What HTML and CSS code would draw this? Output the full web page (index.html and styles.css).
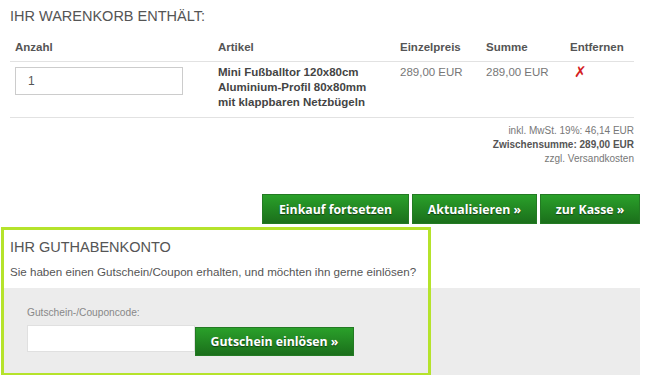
FILE: index.html
```html
<!DOCTYPE html>
<html>

<head>
    <title>Warenkorb</title>
    <link rel="stylesheet" href="styles.css">
</head>

<body>
    <div class="page">
        <h2 class="title">Ihr Warenkorb enthält:</h2>

        <table class="cart">
            <tr>
                <th class="col-qty">Anzahl</th>
                <th class="col-item">Artikel</th>
                <th class="col-price">Einzelpreis</th>
                <th class="col-sum">Summe</th>
                <th class="col-del">Entfernen</th>
            </tr>
            <tr>
                <td><input type="text" class="qty" value="1"></td>
                <td class="item">Mini Fußballtor 120x80cm Aluminium-Profil 80x80mm mit klappbaren Netzbügeln</td>
                <td class="price">289,00 EUR</td>
                <td class="price">289,00 EUR</td>
                <td><span class="remove">&#10007;</span></td>
            </tr>
        </table>

        <div class="totals">
            <div>inkl. MwSt. 19%: 46,14 EUR</div>
            <div class="sub">Zwischensumme: 289,00 EUR</div>
            <div>zzgl. Versandkosten</div>
        </div>

        <div class="actions">
            <button class="btn btn-continue">Einkauf fortsetzen</button>
            <button class="btn btn-update">Aktualisieren &raquo;</button>
            <button class="btn btn-checkout">zur Kasse &raquo;</button>
        </div>

        <div class="coupon">
            <h2 class="coupon-title">Ihr Guthabenkonto</h2>
            <p class="coupon-text">Sie haben einen Gutschein/Coupon erhalten, und möchten ihn gerne einlösen?</p>
            <div class="coupon-box">
                <label class="coupon-label">Gutschein-/Couponcode:</label>
                <div class="coupon-row">
                    <input type="text" class="coupon-input">
                    <button class="btn btn-coupon">Gutschein einlösen &raquo;</button>
                </div>
            </div>
            <div class="highlight"></div>
        </div>
    </div>
</body>

</html>
```

FILE: styles.css
```css
* {
    box-sizing: border-box;
}

body {
    margin: 0;
    font-family: "Liberation Sans", Arial, sans-serif;
    color: #555;
    background: #fff;
}

.page {
    width: 640px;
}

.title {
    margin: 0;
    padding: 6px 10px 0;
    font-size: 14.5px;
    font-weight: normal;
    line-height: 20px;
    text-transform: uppercase;
    color: #555;
}

.cart {
    margin: 10px 0 0 10px;
    width: 624px;
    border-collapse: collapse;
    font-size: 11.5px;
}

.cart th {
    padding: 4px 5px 7px;
    line-height: 14px;
    text-align: left;
    color: #555;
    border-bottom: 1px solid #e2e2e2;
}

.cart td {
    padding: 3px 5px 7px;
    line-height: 15px;
    vertical-align: top;
    border-bottom: 1px solid #e2e2e2;
}

.col-qty {
    width: 203px;
}

.col-item {
    width: 182px;
}

.col-price {
    width: 86px;
}

.col-sum {
    width: 84px;
}

.col-del {
    width: 69px;
}

.qty {
    display: block;
    margin-top: 2px;
    width: 168px;
    height: 28px;
    padding: 0 12px;
    border: 1px solid #ccc;
    font-family: "Liberation Sans", Arial, sans-serif;
    font-size: 12px;
    color: #555;
}

.cart .item {
    padding-right: 28px;
    font-weight: bold;
    color: #444;
}

.price {
    color: #777;
}

.remove {
    display: inline-block;
    margin-left: 4px;
    font-family: "DejaVu Sans", sans-serif;
    font-size: 15px;
    font-weight: bold;
    color: #d42020;
}

.totals {
    margin: 6px 0 0 10px;
    width: 624px;
    text-align: right;
    font-size: 10px;
    line-height: 14px;
    color: #777;
}

.totals .sub {
    font-weight: bold;
    color: #555;
}

.actions {
    display: flex;
    justify-content: flex-end;
    gap: 3px;
    margin-top: 28px;
}

.btn {
    height: 30px;
    padding: 0;
    border: 1px solid #237a23;
    background: linear-gradient(#2aa02a, #1b6f1b);
    color: #fff;
    font-family: "Open Sans", sans-serif;
    font-size: 12.3px;
    font-weight: bold;
    text-shadow: 0 1px 1px rgba(0, 0, 0, 0.5);
}

.btn-continue {
    width: 147px;
}

.btn-update {
    width: 125px;
}

.btn-checkout {
    width: 100px;
}

.coupon {
    position: relative;
    padding-top: 13px;
}

.coupon-title {
    margin: 0 0 7px;
    padding-left: 10px;
    font-size: 14.5px;
    font-weight: normal;
    line-height: 20px;
    text-transform: uppercase;
}

.coupon-text {
    margin: 0 0 8px;
    padding-left: 10px;
    font-size: 11.6px;
    line-height: 16px;
}

.coupon-box {
    margin-left: 2px;
    height: 87px;
    padding: 18px 0 0 25px;
    background: #ececec;
}

.coupon-label {
    display: block;
    font-size: 10.2px;
    line-height: 14px;
    color: #888;
}

.coupon-row {
    display: flex;
    align-items: flex-start;
    margin-top: 5px;
}

.coupon-input {
    width: 168px;
    height: 27px;
    border: 1px solid #e0e0e0;
    background: #fff;
}

.btn-coupon {
    width: 159px;
    margin-top: 2px;
    height: 29px;
}

.highlight {
    position: absolute;
    left: 1px;
    top: 3px;
    width: 430px;
    height: 149px;
    border: 3px solid #b5e32b;
}
```
